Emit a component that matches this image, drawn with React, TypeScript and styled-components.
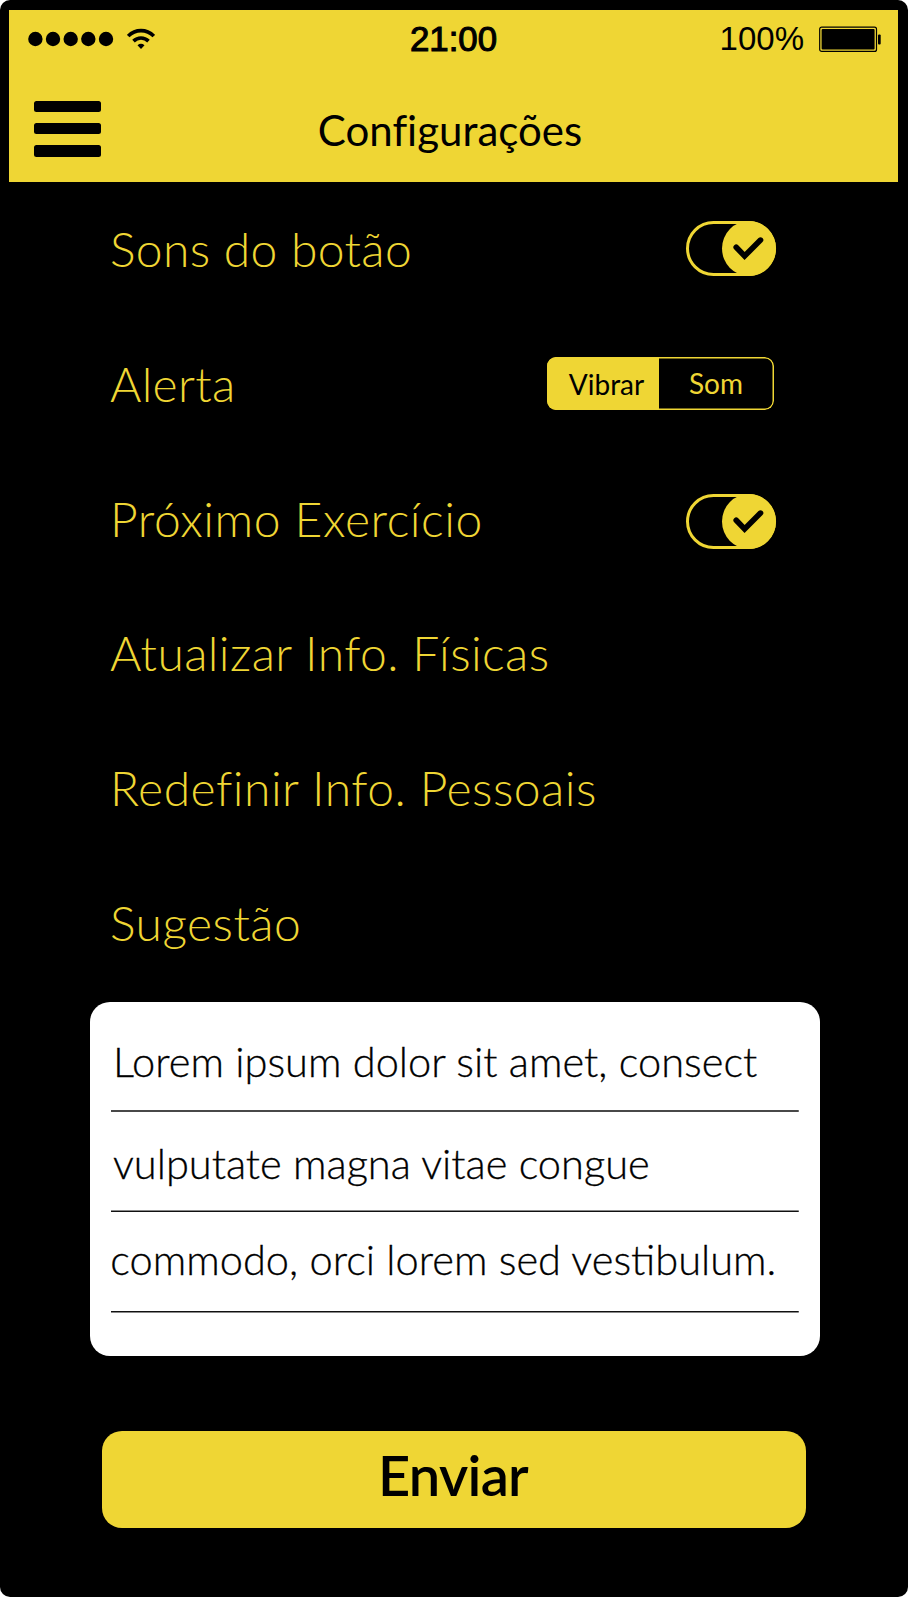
import React from "react";
import styled, { createGlobalStyle } from "styled-components";

const yellow = "#efd634";

const GlobalStyle = createGlobalStyle`
  * { box-sizing: border-box; }
  body { margin: 0; background: #fff; font-family: Lato, "Liberation Sans", sans-serif; }
  button { font: inherit; border: 0; padding: 0; cursor: pointer; }
`;

const Device = styled.div`
  width: 908px;
  height: 1597px;
  padding: 10px 10px 0 9px;
  background: #000;
  border-radius: 10px;
  overflow: hidden;
`;

const Header = styled.header`
  height: 172px;
  background: ${yellow};
`;

const StatusBar = styled.div`
  display: grid;
  grid-template-columns: 1fr auto 1fr;
  align-items: center;
  height: 58px;
  padding: 0 17px 0 19px;
  font-family: "Liberation Sans", Arial, sans-serif;
`;

const StatusGroup = styled.div<{ $end?: boolean }>`
  display: flex;
  align-items: center;
  justify-content: ${(p) => (p.$end ? "flex-end" : "flex-start")};
  gap: ${(p) => (p.$end ? 15 : 13)}px;
`;

const Clock = styled.time`
  margin-right: 2px;
  font-size: 34.8px;
  -webkit-text-stroke: 1.1px #000;
  line-height: 58px;
`;

const Percent = styled.span`
  font-size: 33px;
  line-height: 58px;
`;

const TitleBar = styled.div`
  display: grid;
  grid-template-columns: 92px 1fr 99px;
  height: 114px;
`;

const MenuButton = styled.button`
  display: flex;
  flex-direction: column;
  gap: 11px;
  padding: 33px 0 0 25px;
  background: none;
`;

const MenuBar = styled.span`
  width: 67px;
  height: 11.2px;
  border-radius: 2.5px;
  background: #000;
`;

const Title = styled.h1`
  margin: 0;
  font-size: 42px;
  font-weight: 400;
  line-height: 124px;
  text-align: center;
  font-variant-ligatures: none;
`;

const Settings = styled.main`
  padding: 0 122px 0 101px;
`;

const Row = styled.div`
  display: flex;
  align-items: center;
  justify-content: space-between;
  height: 134.7px;
`;

const Label = styled.span<{ $spacing: number }>`
  color: ${yellow};
  font-size: 48px;
  font-weight: 300;
  line-height: 58px;
  letter-spacing: ${(p) => p.$spacing}px;
  white-space: nowrap;
`;

const Toggle = styled.button<{ $drop?: number }>`
  display: flex;
  justify-content: flex-end;
  width: 90px;
  height: 55px;
  margin-top: ${(p) => (p.$drop ?? 0) - 2}px;
  border: 3px solid ${yellow};
  border-radius: 28px;
  background: #000;
`;

const Knob = styled.span`
  flex: none;
  width: 54px;
  height: 55px;
  margin: -3px -3.4px 0 0;
  border-radius: 50%;
  background: ${yellow};
`;

const Segmented = styled.div`
  position: relative;
  display: flex;
  width: 227px;
  height: 53.5px;
  margin: 0 2px 1px 0;
  border-radius: 9px;
  overflow: hidden;

  &::after {
    content: "";
    position: absolute;
    inset: 0;
    border-radius: inherit;
    box-shadow: inset 0 0 0 1.5px ${yellow};
    pointer-events: none;
  }
`;

const Segment = styled.button<{ $active?: boolean }>`
  flex: ${(p) => (p.$active ? "0 0 112px" : "1")};
  padding: ${(p) => (p.$active ? "0 0 0 7px" : "0 1px 2px 0")};
  background: ${(p) => (p.$active ? yellow : "#000")};
  color: ${(p) => (p.$active ? "#000" : yellow)};
  font-size: 28px;
  line-height: 48px;
`;

const Suggestion = styled.section`
  width: 730.5px;
  height: 354px;
  margin: 11.5px 0 0 80.5px;
  padding: 9.5px 21.5px 0;
  border-radius: 20px;
  background: #fff;
`;

const Line = styled.p<{ $indent: number; $lift: number; $rule: string }>`
  height: 100.6px;
  margin: 0;
  padding-top: ${(p) => p.$lift}px;
  text-indent: ${(p) => p.$indent}px;
  background: linear-gradient(${(p) => p.$rule}) bottom / 100% 2px no-repeat;
  font-size: 41.6px;
  font-weight: 300;
  -webkit-text-stroke: 0.3px #000;
  line-height: 50px;
  white-space: nowrap;
`;

const Submit = styled.button`
  display: block;
  width: 704px;
  height: 97.5px;
  margin: 75px 0 0 93px;
  padding: 0 2px 10px 0;
  border-radius: 20px;
  background: ${yellow};
  color: #000;
  && { font-size: 56px; font-weight: 600; letter-spacing: -0.7px; }
`;

const Signal = () => (
  <svg width="86" height="16" viewBox="0 0 86 16">
    {[7.4, 25, 42.7, 60.3, 78].map((x) => (
      <circle key={x} cx={x} cy="8" r="7.2" />
    ))}
  </svg>
);

const Wifi = () => (
  <svg width="28" height="22" viewBox="0 0 28 22" fill="none" stroke="#000" strokeWidth="3.6">
    <path d="M1.2 8.1 C8.5 0.8 19.5 0.8 26.8 8.1" />
    <path d="M6.5 13.1 C10.7 9 17.3 9 21.5 13.1" />
    <path d="M10.5 17.2 Q14 14.4 17.5 17.2 L14 21 Z" fill="#000" stroke="none" />
  </svg>
);

const Battery = () => (
  <svg width="62" height="26" viewBox="0 0 62 26">
    <rect x=".7" y="1.2" width="56.8" height="24.2" rx="2" fill="none" stroke="#000" strokeWidth="1.2" />
    <rect x="2.6" y="3.1" width="53" height="20.4" rx="1" />
    <rect x="59" y="8.5" width="2.7" height="10" rx="1" />
  </svg>
);

const Switch = ({ drop }: { drop?: number }) => (
  <Toggle $drop={drop} role="switch" aria-checked="true">
    <Knob>
      <svg width="54" height="55" viewBox="0 0 54 55" fill="none" stroke="#000" strokeWidth="5.6">
        <path d="M14.2 26.3 L22.6 35 L38.5 19.1" strokeLinecap="round" />
      </svg>
    </Knob>
  </Toggle>
);

export default function App() {
  return (
    <Device>
      <GlobalStyle />
      <Header>
        <StatusBar>
          <StatusGroup>
            <Signal />
            <Wifi />
          </StatusGroup>
          <Clock>21:00</Clock>
          <StatusGroup $end>
            <Percent>100%</Percent>
            <Battery />
          </StatusGroup>
        </StatusBar>
        <TitleBar>
          <MenuButton aria-label="Menu">
            <MenuBar />
            <MenuBar />
            <MenuBar />
          </MenuButton>
          <Title>Configurações</Title>
        </TitleBar>
      </Header>
      <Settings>
        <Row>
          <Label $spacing={0.34}>Sons do botão</Label>
          <Switch />
        </Row>
        <Row>
          <Label $spacing={0.35}>Alerta</Label>
          <Segmented>
            <Segment $active>Vibrar</Segment>
            <Segment>Som</Segment>
          </Segmented>
        </Row>
        <Row>
          <Label $spacing={0.54}>Próximo Exercício</Label>
          <Switch drop={7} />
        </Row>
        <Row>
          <Label $spacing={0.42}>Atualizar Info. Físicas</Label>
        </Row>
        <Row>
          <Label $spacing={0.5}>Redefinir Info. Pessoais</Label>
        </Row>
        <Row>
          <Label $spacing={0.45}>Sugestão</Label>
        </Row>
      </Settings>
      <Suggestion>
        <Line $indent={2} $lift={25} $rule="#484848, #484848">
          Lorem ipsum dolor sit amet, consect
        </Line>
        <Line $indent={2} $lift={26} $rule="#888 50%, #111 50%">
          vulputate magna vitae congue
        </Line>
        <Line $indent={-0.7} $lift={22} $rule="#111 50%, #888 50%">
          commodo, orci lorem sed vestibulum.
        </Line>
      </Suggestion>
      <Submit>Enviar</Submit>
    </Device>
  );
}
